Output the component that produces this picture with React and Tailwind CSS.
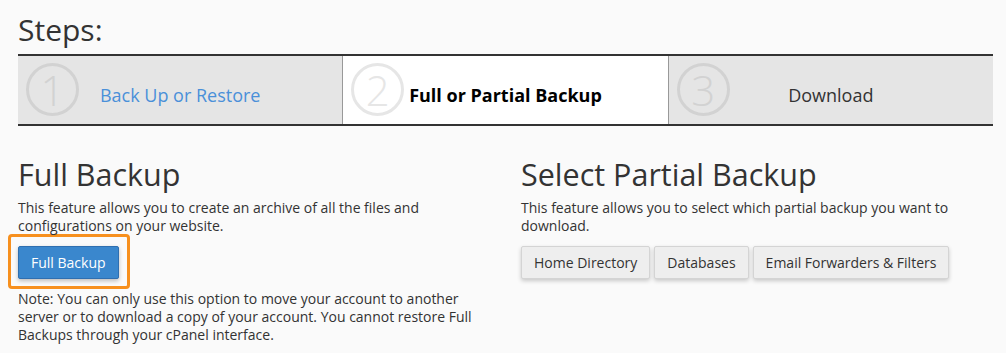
import React from 'react';

const steps = [
  { n: '1', label: 'Back Up or Restore', state: 'link' },
  { n: '2', label: 'Full or Partial Backup', state: 'active' },
  { n: '3', label: 'Download', state: 'todo' },
];

function StepCell({ step, last }) {
  const active = step.state === 'active';
  return (
    <div
      className={
        'relative flex flex-1 items-center justify-center pt-[10px] ' +
        (active ? 'bg-white ' : 'bg-[#e5e5e5] ') +
        (last ? '' : 'border-r border-[#999]')
      }
    >
      <div
        className={
          'absolute left-[8px] top-[7px] flex h-[53px] w-[53px] items-center justify-center rounded-full border-[3px] ' +
          (active ? 'border-[#e6e6e6] text-[#e6e6e6]' : 'border-[#d2d2d2] text-[#d2d2d2]')
        }
      >
        <span className="text-[42px] font-light leading-none">{step.n}</span>
      </div>
      <span
        className={
          'text-[18px] ' +
          (step.state === 'link'
            ? 'text-[#4a90d9]'
            : active
              ? 'font-bold text-black'
              : 'text-[#333]')
        }
      >
        {step.label}
      </span>
    </div>
  );
}

export default function App() {
  return (
    <div
      className="min-h-[353px] w-[1006px] bg-[#fafafa] px-[18px] pt-[10px] text-[#333]"
      style={{ fontFamily: '"Open Sans", "Liberation Sans", sans-serif' }}
    >
      <h1 className="text-[30px] leading-[40px]">Steps:</h1>
      <div className="mt-[4px] flex h-[72px] w-[975px] border-y-2 border-[#333]">
        {steps.map((s, i) => (
          <StepCell key={s.n} step={s} last={i === steps.length - 1} />
        ))}
      </div>

      <div className="mt-[30px] grid grid-cols-[503px_1fr]">
        <div className="pr-[30px]">
          <h2 className="text-[30.5px] leading-[36px]">Full Backup</h2>
          <p className="mt-[7px] text-[14px] leading-[18px]">
            This feature allows you to create an archive of all the files and configurations on
            your website.
          </p>
          <div className="-ml-[10px] -mt-[1px] flex w-fit rounded-[4px] border-[3px] border-[#f7901e] pb-[7px] pl-[7px] pr-[8px] pt-[9px]">
            <button
              type="button"
              className="rounded-[2px] border border-[#2f6fb0] bg-[#3a87cd] px-[12px] py-[6px] text-[14px] leading-[19px] text-white shadow-[0_2px_4px_rgba(0,0,0,0.25)]"
            >
              Full Backup
            </button>
          </div>
          <p className="mt-[1px] text-[14px] leading-[18px]">
            Note: You can only use this option to move your account to another server or to
            download a copy of your account. You cannot restore Full Backups through your cPanel
            interface.
          </p>
        </div>

        <div>
          <h2 className="text-[30.5px] leading-[36px]">Select Partial Backup</h2>
          <p className="mt-[7px] text-[14px] leading-[18px]">
            This feature allows you to select which partial backup you want to download.
          </p>
          <div className="mt-[11px] flex gap-[4px]">
            {['Home Directory', 'Databases', 'Email Forwarders & Filters'].map((b) => (
              <button
                key={b}
                type="button"
                className="rounded-[2px] border border-[#d4d4d4] bg-[#eeeeee] px-[12px] py-[6px] text-[14px] leading-[19px] text-[#333] shadow-[0_2px_4px_rgba(0,0,0,0.2)]"
              >
                {b}
              </button>
            ))}
          </div>
        </div>
      </div>
    </div>
  );
}
